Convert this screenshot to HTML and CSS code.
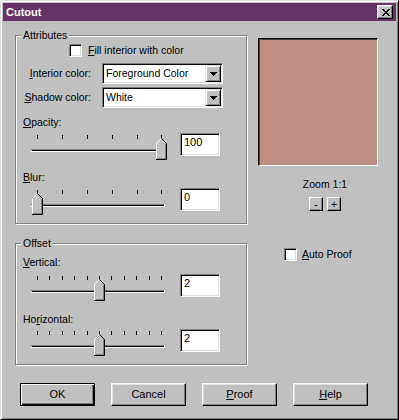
FILE: index.html
```html
<!DOCTYPE html>
<html>
<head>
<meta charset="utf-8">
<title>Cutout</title>
<link rel="stylesheet" href="styles.css">
</head>
<body>
<div class="window">
  <div class="titlebar">
    <span class="title">Cutout</span>
    <span class="close-btn"><svg width="8" height="7" viewBox="0 0 8 7" shape-rendering="crispEdges"><path d="M0 0h2v1H0zM6 0h2v1H6zM1 1h2v1H1zM5 1h2v1H5zM2 2h4v1H2zM3 3h2v1H3zM2 4h4v1H2zM1 5h2v1H1zM5 5h2v1H5zM0 6h2v1H0zM6 6h2v1H6z" fill="#000"/></svg></span>
  </div>
  <div class="main">
    <div class="left-col">
      <div class="group group-attrs">
        <span class="legend">Attributes</span>
        <div class="check-row check-fill"><span class="checkbox"></span><span><u>F</u>ill interior with color</span></div>
        <div class="combo-row combo-first">
          <span class="field-label"><u>I</u>nterior color:</span>
          <div class="combo"><span class="combo-text">Foreground Color</span><span class="combo-btn"><svg width="7" height="4" viewBox="0 0 7 4" shape-rendering="crispEdges"><path d="M0 0h7v1H0zM1 1h5v1H1zM2 2h3v1H2zM3 3h1v1H3z" fill="#000"/></svg></span></div>
        </div>
        <div class="combo-row combo-second">
          <span class="field-label"><u>S</u>hadow color:</span>
          <div class="combo"><span class="combo-text">White</span><span class="combo-btn"><svg width="7" height="4" viewBox="0 0 7 4" shape-rendering="crispEdges"><path d="M0 0h7v1H0zM1 1h5v1H1zM2 2h3v1H2zM3 3h1v1H3z" fill="#000"/></svg></span></div>
        </div>
        <div class="slider-label label-opacity"><u>O</u>pacity:</div>
        <div class="slider-row">
          <svg class="slider" width="136" height="28" viewBox="0 0 136 28">
            <g fill="#000" shape-rendering="crispEdges">
              <rect x="6" y="2" width="1" height="4"/><rect x="31" y="2" width="1" height="4"/><rect x="56" y="2" width="1" height="4"/><rect x="81" y="2" width="1" height="4"/><rect x="106" y="2" width="1" height="4"/><rect x="130" y="2" width="1" height="4"/>
            </g>
            <g shape-rendering="crispEdges">
              <rect x="0" y="16" width="134" height="1" fill="#808080"/>
              <rect x="1" y="17" width="132" height="1" fill="#000"/>
              <rect x="0" y="18" width="134" height="1" fill="#fff"/>
              <rect x="133" y="16" width="1" height="3" fill="#fff"/>
            </g>
            <path d="M125 27V10.5L130.5 5L136 10.5V27Z" fill="#c0c0c0"/>
            <path d="M125.5 26V10.5L130.5 5.5" stroke="#fff" fill="none"/>
            <path d="M130.5 5.5L135.5 10.5V26.5H125" stroke="#000" fill="none"/>
            <path d="M134.5 11V25.5H126" stroke="#808080" fill="none"/>
          </svg>
          <div class="edit">100</div>
        </div>
        <div class="slider-label label-blur"><u>B</u>lur:</div>
        <div class="slider-row">
          <svg class="slider" width="136" height="28" viewBox="0 0 136 28">
            <g fill="#000" shape-rendering="crispEdges">
              <rect x="6" y="2" width="1" height="4"/><rect x="31" y="2" width="1" height="4"/><rect x="56" y="2" width="1" height="4"/><rect x="81" y="2" width="1" height="4"/><rect x="106" y="2" width="1" height="4"/><rect x="130" y="2" width="1" height="4"/>
            </g>
            <g shape-rendering="crispEdges">
              <rect x="0" y="16" width="134" height="1" fill="#808080"/>
              <rect x="1" y="17" width="132" height="1" fill="#000"/>
              <rect x="0" y="18" width="134" height="1" fill="#fff"/>
              <rect x="133" y="16" width="1" height="3" fill="#fff"/>
            </g>
            <path d="M1 27V10.5L6.5 5L12 10.5V27Z" fill="#c0c0c0"/>
            <path d="M1.5 26V10.5L6.5 5.5" stroke="#fff" fill="none"/>
            <path d="M6.5 5.5L11.5 10.5V26.5H1" stroke="#000" fill="none"/>
            <path d="M10.5 11V25.5H2" stroke="#808080" fill="none"/>
          </svg>
          <div class="edit">0</div>
        </div>
      </div>
      <div class="group group-offset">
        <span class="legend">Offset</span>
        <div class="slider-label label-vertical"><u>V</u>ertical:</div>
        <div class="slider-row row-vertical">
          <svg class="slider" width="136" height="28" viewBox="0 0 136 28">
            <g fill="#000" shape-rendering="crispEdges">
              <rect x="6" y="2" width="1" height="4"/><rect x="18" y="2" width="1" height="4"/><rect x="31" y="2" width="1" height="4"/><rect x="43" y="2" width="1" height="4"/><rect x="56" y="2" width="1" height="4"/><rect x="68" y="2" width="1" height="4"/><rect x="80" y="2" width="1" height="4"/><rect x="93" y="2" width="1" height="4"/><rect x="105" y="2" width="1" height="4"/><rect x="118" y="2" width="1" height="4"/><rect x="130" y="2" width="1" height="4"/>
            </g>
            <g shape-rendering="crispEdges">
              <rect x="0" y="16" width="134" height="1" fill="#808080"/>
              <rect x="1" y="17" width="132" height="1" fill="#000"/>
              <rect x="0" y="18" width="134" height="1" fill="#fff"/>
              <rect x="133" y="16" width="1" height="3" fill="#fff"/>
            </g>
            <path d="M63 27V10.5L68.5 5L74 10.5V27Z" fill="#c0c0c0"/>
            <path d="M63.5 26V10.5L68.5 5.5" stroke="#fff" fill="none"/>
            <path d="M68.5 5.5L73.5 10.5V26.5H63" stroke="#000" fill="none"/>
            <path d="M72.5 11V25.5H64" stroke="#808080" fill="none"/>
          </svg>
          <div class="edit">2</div>
        </div>
        <div class="slider-label label-horizontal">Ho<u>r</u>izontal:</div>
        <div class="slider-row row-horizontal">
          <svg class="slider" width="136" height="28" viewBox="0 0 136 28">
            <g fill="#000" shape-rendering="crispEdges">
              <rect x="6" y="2" width="1" height="4"/><rect x="18" y="2" width="1" height="4"/><rect x="31" y="2" width="1" height="4"/><rect x="43" y="2" width="1" height="4"/><rect x="56" y="2" width="1" height="4"/><rect x="68" y="2" width="1" height="4"/><rect x="80" y="2" width="1" height="4"/><rect x="93" y="2" width="1" height="4"/><rect x="105" y="2" width="1" height="4"/><rect x="118" y="2" width="1" height="4"/><rect x="130" y="2" width="1" height="4"/>
            </g>
            <g shape-rendering="crispEdges">
              <rect x="0" y="16" width="134" height="1" fill="#808080"/>
              <rect x="1" y="17" width="132" height="1" fill="#000"/>
              <rect x="0" y="18" width="134" height="1" fill="#fff"/>
              <rect x="133" y="16" width="1" height="3" fill="#fff"/>
            </g>
            <path d="M63 27V10.5L68.5 5L74 10.5V27Z" fill="#c0c0c0"/>
            <path d="M63.5 26V10.5L68.5 5.5" stroke="#fff" fill="none"/>
            <path d="M68.5 5.5L73.5 10.5V26.5H63" stroke="#000" fill="none"/>
            <path d="M72.5 11V25.5H64" stroke="#808080" fill="none"/>
          </svg>
          <div class="edit">2</div>
        </div>
      </div>
    </div>
    <div class="right-col">
      <div class="preview"></div>
      <div class="zoom-label">Zoom 1:1</div>
      <div class="zoom-btns">
        <span class="mini-btn">-</span>
        <span class="mini-btn">+</span>
      </div>
      <div class="check-row check-auto"><span class="checkbox"></span><span><u>A</u>uto Proof</span></div>
    </div>
  </div>
  <div class="button-row">
    <div class="btn btn-default">OK</div>
    <div class="btn">Cancel</div>
    <div class="btn"><u>P</u>roof</div>
    <div class="btn"><u>H</u>elp</div>
  </div>
</div>
</body>
</html>
```
FILE: styles.css
```css
* {
  box-sizing: border-box;
}

html, body {
  margin: 0;
  padding: 0;
}

body {
  background: #c0c0c0;
  font-family: "Liberation Sans", Arial, sans-serif;
  font-size: 10.5px;
  line-height: 13px;
  color: #000;
}

u {
  text-decoration: underline;
  text-underline-offset: 1px;
}

.window {
  width: 399px;
  height: 420px;
  padding: 2px;
  border: 1px solid;
  border-color: #dfdfdf #000 #000 #dfdfdf;
  box-shadow: inset 1px 1px #fff, inset -1px -1px #808080;
  background: #c0c0c0;
  display: flex;
  flex-direction: column;
}

.titlebar {
  height: 18px;
  flex: none;
  background: #663366;
  display: flex;
  align-items: center;
  justify-content: space-between;
  padding: 0 3px 0 3px;
}

.title {
  color: #fff;
  font-weight: bold;
  font-size: 11px;
}

.close-btn {
  width: 16px;
  height: 14px;
  background: #c0c0c0;
  border: 1px solid;
  border-color: #fff #000 #000 #fff;
  box-shadow: inset -1px -1px #808080, inset 1px 1px #dfdfdf;
  display: flex;
  align-items: center;
  justify-content: center;
  padding-left: 1px;
}

.close-btn svg {
  display: block;
}

.main {
  display: flex;
  align-items: flex-start;
  gap: 11px;
  margin-top: 14px;
  padding-left: 12px;
}

.left-col {
  width: 232px;
  flex: none;
  display: flex;
  flex-direction: column;
}

.group {
  position: relative;
  border: 1px solid #808080;
  box-shadow: inset 1px 1px #fff, 1px 1px #fff;
  padding-left: 7px;
}

.legend {
  position: absolute;
  top: -7px;
  left: 5px;
  padding: 0 2px;
  background: #c0c0c0;
  line-height: 13px;
}

.group-attrs {
  height: 189px;
}

.group-offset {
  height: 122px;
  margin-top: 19px;
}

.check-row {
  display: flex;
  align-items: center;
  gap: 5px;
  height: 13px;
}

.check-fill {
  margin-top: 8px;
  margin-left: 46px;
  gap: 6px;
}

.checkbox {
  width: 13px;
  height: 13px;
  flex: none;
  background: #fff;
  border: 1px solid;
  border-color: #808080 #fff #fff #808080;
  box-shadow: inset 1px 1px #000, inset -1px -1px #dfdfdf;
}

.combo-row {
  display: flex;
  align-items: center;
}

.combo-first {
  margin-top: 6px;
}

.combo-second {
  margin-top: 3px;
}

.field-label {
  width: 68px;
  text-align: right;
  margin-right: 11px;
  white-space: nowrap;
}

.combo {
  width: 121px;
  height: 21px;
  padding: 1px;
  display: flex;
  background: #fff;
  border: 1px solid;
  border-color: #808080 #fff #fff #808080;
  box-shadow: inset 1px 1px #000, inset -1px -1px #dfdfdf;
}

.combo-text {
  flex: 1;
  padding-left: 2px;
  line-height: 17px;
  white-space: nowrap;
}

.combo-btn {
  width: 16px;
  height: 17px;
  flex: none;
  background: #c0c0c0;
  border: 1px solid;
  border-color: #dfdfdf #000 #000 #dfdfdf;
  box-shadow: inset 1px 1px #fff, inset -1px -1px #808080;
  display: flex;
  align-items: center;
  justify-content: center;
  padding-top: 1px;
}

.combo-btn svg {
  display: block;
}

.slider-label {
  line-height: 13px;
}

.label-opacity {
  margin-top: 8px;
}

.label-blur {
  margin-top: 10px;
}

.label-vertical {
  margin-top: 12px;
}

.label-horizontal {
  margin-top: 11px;
}

.slider-row {
  display: flex;
  align-items: flex-start;
  margin-top: 4px;
}

.row-vertical {
  margin-top: 5px;
}

.row-horizontal {
  margin-top: 3px;
}

.slider {
  display: block;
  flex: none;
  margin-left: 8px;
}

.edit {
  width: 40px;
  height: 23px;
  margin-left: 13px;
  padding: 2px 0 0 3px;
  background: #fff;
  border: 1px solid;
  border-color: #808080 #fff #fff #808080;
  box-shadow: inset 1px 1px #000, inset -1px -1px #dfdfdf;
  font-size: 11px;
}

.right-col {
  width: 134px;
  flex: none;
  display: flex;
  flex-direction: column;
  align-items: center;
}

.preview {
  align-self: flex-start;
  width: 120px;
  height: 128px;
  margin-top: 3px;
  background: #be8e85;
  border: 1px solid;
  border-color: #000 #fff #fff #000;
  box-shadow: inset 1px 1px #404040;
}

.zoom-label {
  margin-top: 12px;
}

.zoom-btns {
  display: flex;
  gap: 4px;
  margin-top: 6px;
}

.mini-btn {
  width: 14px;
  height: 14px;
  border: 1px solid;
  border-color: #fff #000 #000 #fff;
  box-shadow: inset -1px -1px #808080;
  display: flex;
  align-items: center;
  justify-content: center;
  line-height: 12px;
}

.check-auto {
  align-self: flex-start;
  margin-top: 37px;
  margin-left: 26px;
}

.button-row {
  display: flex;
  gap: 16px;
  margin-top: 18px;
  padding-left: 17px;
}

.btn {
  width: 75px;
  height: 23px;
  display: flex;
  align-items: center;
  justify-content: center;
  border: 1px solid;
  border-color: #fff #000 #000 #fff;
  box-shadow: inset -1px -1px #808080, inset 1px 1px #dfdfdf;
  font-size: 11px;
}

.btn-default {
  border-color: #000;
  box-shadow: inset 1px 1px #fff, inset -1px -1px #000, inset -2px -2px #808080;
}
```
